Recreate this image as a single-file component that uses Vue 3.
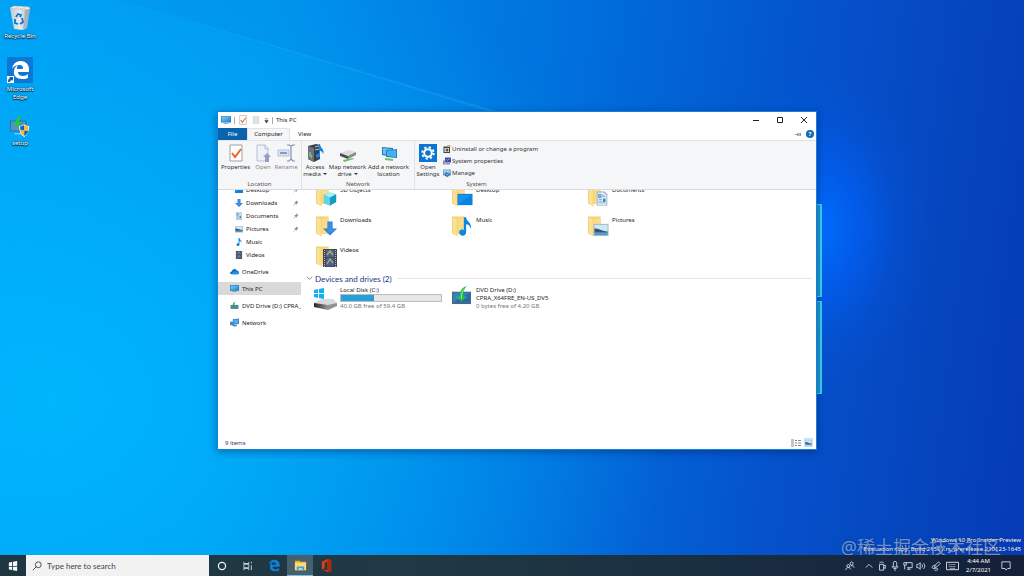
<script setup>
import { ref } from 'vue'

const shortcuts = [
  { name: 'Recycle Bin', icon: 'recycle', size: 'tall' },
  { name: 'Microsoft Edge', icon: 'edge-tile', size: 'tall' },
  { name: 'setup', icon: 'setup', size: 'short' }
]

const groups = [
  {
    name: 'Location',
    key: 'location',
    buttons: [
      { label: ['Properties'], icon: 'properties', width: 'w-m' },
      { label: ['Open'], icon: 'open', width: 'w-xs', disabled: true },
      { label: ['Rename'], icon: 'rename', width: 'w-s', disabled: true }
    ]
  },
  {
    name: 'Network',
    key: 'network',
    buttons: [
      { label: ['Access', 'media'], icon: 'media', width: 'w-s', menu: true },
      { label: ['Map network', 'drive'], icon: 'mapdrive', width: 'w-l', menu: true },
      { label: ['Add a network', 'location'], icon: 'netloc', width: 'w-xl' }
    ]
  },
  {
    name: 'System',
    key: 'system',
    buttons: [{ label: ['Open', 'Settings'], icon: 'settings', width: 'w-s' }],
    links: [
      { label: 'Uninstall or change a program', icon: 'uninstall' },
      { label: 'System properties', icon: 'sysprops' },
      { label: 'Manage', icon: 'manage' }
    ]
  }
]

const quick = [
  { name: 'Desktop', icon: 'desktop', pinned: true },
  { name: 'Downloads', icon: 'down', pinned: true },
  { name: 'Documents', icon: 'doc', pinned: true },
  { name: 'Pictures', icon: 'pic', pinned: true },
  { name: 'Music', icon: 'note' },
  { name: 'Videos', icon: 'film' }
]
const roots = [
  { name: 'OneDrive', icon: 'cloud' },
  { name: 'This PC', icon: 'pc', current: true },
  { name: 'DVD Drive (D:) CPRA_X64FRE', icon: 'dvd-small' },
  { name: 'Network', icon: 'network' }
]

const folders = [
  { name: '3D Objects', icon: 'cube' },
  { name: 'Desktop', icon: 'desktop' },
  { name: 'Documents', icon: 'doc' },
  { name: 'Downloads', icon: 'down' },
  { name: 'Music', icon: 'note' },
  { name: 'Pictures', icon: 'pic' },
  { name: 'Videos', icon: 'film' }
]

const disk = { free: 40, total: 59.4 }
const query = ref('')
const tray = ['people', 'chevron-up', 'camera', 'mic', 'display', 'speaker', 'pen', 'keyboard']
const trayNames = {
  people: 'People', 'chevron-up': 'Show hidden icons', camera: 'Meet now', mic: 'Microphone',
  display: 'Network status', speaker: 'Volume', pen: 'Ink workspace', keyboard: 'Touch keyboard'
}
</script>

<template>
  <svg class="defs" aria-hidden="true">
    <defs>
      <linearGradient id="g-folder" x1="0" x2="1" y1="0" y2="0">
        <stop offset="0" stop-color="#f3cf6b" /><stop offset=".35" stop-color="#fbe5a0" /><stop offset="1" stop-color="#fbd775" />
      </linearGradient>
      <linearGradient id="g-screen" x1="0" x2="1" y1="0" y2="1">
        <stop offset="0" stop-color="#7cd0fa" /><stop offset="1" stop-color="#1c84d4" />
      </linearGradient>
      <linearGradient id="g-disk" x1="0" x2="1"><stop offset="0" stop-color="#222" /><stop offset="1" stop-color="#999" /></linearGradient>
      <linearGradient id="g-bin" x1="0" x2="1"><stop offset="0" stop-color="#b9cad6" /><stop offset=".5" stop-color="#e6edf1" /><stop offset="1" stop-color="#9fb2c0" /></linearGradient>
    </defs>
    <symbol id="recycle" viewBox="0 0 26 26">
      <path d="M3 4l4-2 15 1 1 2-3 19-4 2-9-1z" fill="url(#g-bin)" />
      <path d="M3 4l4-2 15 1 1 2-5 1z" fill="#f3f5f5" stroke="#a9b5bd" stroke-width=".6" />
      <path d="M6 4l5-1 3 1 4-1 2 2-3 .5z" fill="#cfd8dd" />
      <path d="M18 6l5-1-3 19-4 2z" fill="#92a8b8" opacity=".6" />
      <path d="M9 13l2-3 3 1-1 2M15 14l1 4-3 2M11 20l-3-1 0-4" fill="none" stroke="#1773c4" stroke-width="1.8" />
    </symbol>
    <symbol id="edge-e" viewBox="0 0 20 20">
      <path d="M1 9C2 3 6 1 10 1c5 0 8 4 8 8v3H7c0 3 3 4 5 4 2 0 4-1 5-2v4c-2 1-4 1-6 1-5 0-9-3-8-8 0-3 2-5 4-6-1 1-1 3-1 4h6c0-3-1-4-4-4C5 5 3 6 1 9z" fill="currentColor" />
    </symbol>
    <symbol id="edge-tile" viewBox="0 0 26 26">
      <path d="M0 0h26v26H0z" fill="#0c78d4" />
      <path transform="translate(4 3)" d="M1 9C2 3 6 1 10 1c5 0 8 4 8 8v3H7c0 3 3 4 5 4 2 0 4-1 5-2v4c-2 1-4 1-6 1-5 0-9-3-8-8 0-3 2-5 4-6-1 1-1 3-1 4h6c0-3-1-4-4-4C5 5 3 6 1 9z" fill="#fff" />
      <path d="M0 19h7v7H0z" fill="#fff" /><path d="M1 25c0-2 0-3 2-4l-1-1h4v4l-1-1c-1 0-2 1-2 2z" fill="#235fae" />
    </symbol>
    <symbol id="setup" viewBox="0 0 24 24">
      <path d="M1 6h18v12H1z" fill="#356b99" /><path d="M2 7h16v10H2z" fill="#4d94c9" />
      <path d="M6 20h9v1H6z" fill="#cdd7df" />
      <path d="M14 0c-2 2-3 5-3 8h3l-5 5-5-5h3c1-4 3-7 7-8z" fill="#28c83a" />
      <path d="M11 12c2 0 4-1 5.500-2 1.500 1 3.500 2 5.500 2 0 6-2 10-5.500 12C13 22 11 18 11 12z" fill="#fff" />
      <path d="M12 12.500c2 0 3-.5 4.500-1.500v6H12.500zM16.500 17h4.500c-.5 3-2 5-4.500 6z" fill="#1c62b8" />
      <path d="M21 12.500c-2 0-3-.5-4.500-1.500v6H21zM16.500 17H12.500c.5 3 2 5 4 6z" fill="#f9b91e" />
    </symbol>
    <symbol id="folder" viewBox="0 0 22 22">
      <path d="M0 1h13v18H6z" fill="#f3cd6c" /><path d="M5 2h8v17H5z" fill="#f6d47c" />
      <path d="M0 1l6 3v18l-6-3z" fill="url(#g-folder)" /><path d="M7 3h6v16H7z" fill="#fbdc8c" />
    </symbol>
    <symbol id="desktop" viewBox="0 0 16 16"><path d="M0 2h16v12H0z" fill="#0a7bd6" /><path d="M1 3h14v10H1z" fill="#1593f2" /><path d="M1 13L15 3v10z" fill="#0783e0" /></symbol>
    <symbol id="down" viewBox="0 0 16 16"><path d="M5 0h6v8h5l-8 8-8-8h5z" fill="#2e80d2" /><path d="M6 1h4v8h3l-5 5-5-5h3z" fill="#428fdd" /></symbol>
    <symbol id="doc" viewBox="0 0 16 16"><path d="M2 0h9l3 3v13H2z" fill="#8fa9bd" /><path d="M3 1h7l3 3v11H3z" fill="#f4f9fc" /><path d="M4 3h3v4H4zM8 4h3M8 6h4M4 9h4M4 11h4M4 13h8" fill="#6eb4e4" stroke="#65a1cf" /><path d="M9 8h3v4H9z" fill="#3f89b8" /></symbol>
    <symbol id="pic" viewBox="0 0 16 16"><path d="M0 2h16v13H0z" fill="#a6b5c0" /><path d="M1 3h14v11H1z" fill="#cce9fb" /><path d="M1 7c4-1 8 3 14 3v2H1z" fill="#315a66" /><path d="M1 11h14v3H1z" fill="#5a99cf" /></symbol>
    <symbol id="note" viewBox="0 0 12 16"><path d="M5 0h2c0 4 5 4 4 10-1-3-2-4-4-4v7c0 4-6 4-6 0 0-2 2-3 4-2z" fill="#0c86df" /></symbol>
    <symbol id="film" viewBox="0 0 14 18"><path d="M0 0h14v18H0z" fill="#45484d" /><path d="M3 1h8v7H3z" fill="#3d68a8" /><path d="M3 9h8v8H3z" fill="#3a62a5" /><path d="M4 6l3-4 3 4M4 15l3-5 3 4" stroke="#caa14c" fill="none" stroke-width="1.400" /><path d="M1.500 1v17M12.500 1v17" stroke="#b5b5b5" stroke-dasharray="1 1" /></symbol>
    <symbol id="cube" viewBox="0 0 16 16"><path d="M1 4l7-3 7 2v9l-7 4-7-3z" fill="#27b6d2" /><path d="M1 4l7-3 7 2-7 4z" fill="#a8edf5" /><path d="M8 7l7-4v9l-7 4z" fill="#129dbf" /><path d="M1 4l7 3v9l-7-3z" fill="#5bd4e5" /></symbol>
    <symbol id="cloud" viewBox="0 0 16 16"><path d="M2 13c-3-1-2-5 1-5 1-5 7-6 9-2 3 0 5 3 3 6-1 1-2 1-3 1z" fill="#0f6fc4" /><path d="M4 13c-2-2 1-4 3-4 3-3 8-1 9 2-1 2-2 2-4 2z" fill="#1a96e8" /></symbol>
    <symbol id="pc" viewBox="0 0 16 16"><path d="M0 2h16v10H0z" fill="#2374ad" /><path d="M1 3h14v8H1z" fill="url(#g-screen)" /><path d="M4 13h8v1H4z" fill="#4787af" /></symbol>
    <symbol id="dvd-small" viewBox="0 0 16 16"><path d="M1 7h14v7H1z" fill="#5b7380" /><path d="M2 8h12v4H2z" fill="#4691ac" /><path d="M10 1c-2 2-2 4-2 6h3l-4 4-4-4h2c0-3 2-5 5-6z" fill="#28a956" /></symbol>
    <symbol id="network" viewBox="0 0 16 16"><path d="M5 2l11-1v9L5 12z" fill="#2876b8" /><path d="M6 3l9-1v7l-9 2z" fill="#55aee9" /><path d="M0 6l8 1v8l-8-3z" fill="#3d8cd0" /><path d="M7 13l6-2-1 3-4 2z" fill="#5592c0" /></symbol>
    <symbol id="dvd" viewBox="0 0 20 20"><path d="M0 6h20v13H0z" fill="#456982" /><path d="M1 7h18v10H1z" fill="#397fc0" /><path d="M1 17L19 7v10z" fill="#2c68ad" /><path d="M16 0c-4 3-4 7-4 11h4l-6 5-6-5h4c0-6 3-10 8-11z" fill="#23c342" /><path d="M13 3c-3 3-3 7-3 10" stroke="#8cf19a" fill="none" /></symbol>
    <symbol id="drive" viewBox="0 0 24 24">
      <path d="M1 3l4-1v4H1zM6 2l5-1v5H6zM1 7h4v4l-4-1zM6 7h5v5l-5-1z" fill="#0cb3ee" />
      <path d="M1 16l7-4h12l4 4-9 4z" fill="#d8dadb" /><path d="M1 16l14 2v5L1 20z" fill="url(#g-disk)" /><path d="M15 18l9-2v3l-9 4z" fill="#8f9294" />
    </symbol>
    <symbol id="properties" viewBox="0 0 18 18"><path d="M3 1h12v16H3z" fill="#fff" stroke="#9ba1a7" /><path d="M5 9l3 4 6-8" fill="none" stroke="#ee6522" stroke-width="2" /></symbol>
    <symbol id="open" viewBox="0 0 18 18"><path d="M3 1h8l3 4v12H3z" fill="#eef1fa" stroke="#b6c0d8" /><path d="M11 1v4h4" fill="none" stroke="#b6c0d8" /><path d="M13 9l4 4h-2v5h-4v-5H9z" fill="#93a1bd" /></symbol>
    <symbol id="rename" viewBox="0 0 18 18"><path d="M1 6h11v6H1z" fill="#dce3f2" stroke="#b5c1da" /><path d="M3 8h7v2H3z" fill="#8799c1" /><path d="M10 1h2l2 1 2-1h2M14 2v13M10 17h2l2-2 2 2h2" fill="none" stroke="#8390b3" stroke-width="1.200" /></symbol>
    <symbol id="media" viewBox="0 0 18 18"><path d="M2 2l8-2 4 1v14l-6 3-6-3z" fill="#3a3f46" /><path d="M2 2l6 2v14l-6-3z" fill="#6b727b" /><path d="M9 3l4-1M9 6l4-1M4 8v5" stroke="#a6cbe0" /><path d="M13 0h1c0 4 5 5 3 10-1-3-2-3-3-3v5c-1 3-5 2-4-1l3-2z" fill="#1387e3" /><path d="M3 12l3-2v5z" fill="#84b945" /></symbol>
    <symbol id="mapdrive" viewBox="0 0 18 18"><path d="M1 9l9-3 7 2-8 4z" fill="#ddd" /><path d="M1 9l8 3v3l-8-3z" fill="#4c4f51" /><path d="M9 12l8-4v3l-8 4z" fill="#858889" /><path d="M4 16l10-2 1 1-10 3z" fill="#67c167" /></symbol>
    <symbol id="netloc" viewBox="0 0 18 18"><path d="M2 3l11 1v9L2 11z" fill="#2377b4" /><path d="M3 4l9 1v7l-9-2z" fill="#64c2f4" /><path d="M6 6l11-1v9l-11-1z" fill="#2582c5" /><path d="M7 7l9-1v7l-9-1z" fill="#48b0ee" /><path d="M5 14l8 1v2l-8-1z" fill="#68c468" /></symbol>
    <symbol id="settings" viewBox="0 0 18 18"><path d="M0 0h18v18H0z" fill="#0b76d1" /><circle cx="9" cy="9" r="3.800" fill="none" stroke="#fff" stroke-width="2" /><circle cx="9" cy="9" r="5.700" fill="none" stroke="#fff" stroke-width="2" stroke-dasharray="2.200 2.277" /></symbol>
    <symbol id="uninstall" viewBox="0 0 16 16"><path d="M1 3h13v13H1z" fill="#3f4248" /><path d="M3 6h9v8H3z" fill="#e7e5dc" /><circle cx="8" cy="10" r="3" fill="#49565b" /><path d="M8 0h7v4H8z" fill="#d4b461" /></symbol>
    <symbol id="sysprops" viewBox="0 0 16 16"><path d="M4 1h12v10H4z" fill="#5756a5" /><path d="M5 2h10v8H5z" fill="#3335c5" /><path d="M7 4l2 3 5-4" fill="none" stroke="#bfc5ff" stroke-width="1.500" /><path d="M0 7h5v8H0zM6 12h8v3H6z" fill="#8a93a1" /></symbol>
    <symbol id="manage" viewBox="0 0 16 16"><path d="M0 1h16v12H0z" fill="#6999b8" /><path d="M1 2h14v7H1z" fill="#95cceb" /><path d="M4 14V9l3-3 3 3 3-2v6l-4 3z" fill="#2d75ae" /><path d="M6 10l2 2 3-2" stroke="#fff" fill="none" /></symbol>
    <symbol id="pin" viewBox="0 0 10 10"><path d="M6 1l3 3-2 1-1 3-4-4 3-1z" fill="#8b8f93" /><path d="M4 6L1 9" stroke="#7b7f83" /></symbol>
    <symbol id="page" viewBox="0 0 12 12"><path d="M2 1h8v10H2z" fill="#dedfe2" /></symbol>
    <symbol id="ribbon-pin" viewBox="0 0 10 10"><path d="M0 5h4M4 3v4M4 4h4M4 6h4M8 3v4" fill="none" stroke="#82868b" stroke-width="1.200" /></symbol>
    <symbol id="search" viewBox="0 0 12 12"><circle cx="7.500" cy="4.500" r="3.500" fill="none" stroke="#333" /><path d="M5 7L1 11" stroke="#333" /></symbol>
    <symbol id="windows" viewBox="0 0 12 12"><path d="M1 2l4-1v5H1zM6 1l5-1v6H6zM1 7h4v4l-4-1zM6 7h5v5l-5-1z" fill="#f7fbfd" /></symbol>
    <symbol id="cortana" viewBox="0 0 12 12"><circle cx="6" cy="6" r="4.300" fill="none" stroke="#f2f5f6" stroke-width="1.500" /></symbol>
    <symbol id="taskview" viewBox="0 0 12 12"><path d="M1 1v2h6V1M1 11V9h6v2M1 4h6v4H1zM10 1v2M10 5v6" fill="none" stroke="#dbe2e5" /></symbol>
    <symbol id="explorer" viewBox="0 0 14 14"><path d="M1 2h5l1 1h6v9H1z" fill="#efb32e" /><path d="M1 4h12v8H1z" fill="#fbdc76" /><path d="M3 8h8v5H9v-3H5v3H3z" fill="#409fe0" /></symbol>
    <symbol id="office" viewBox="0 0 14 14"><path d="M2 3l6-3 4 1v12l-4 1-6-3 6 1V3L5 4v6l-3 1z" fill="#e23b16" /><path d="M8 0l4 1v12l-4 1z" fill="#b5270c" /></symbol>
    <symbol id="people" viewBox="0 0 12 12"><circle cx="4" cy="6" r="1.800" /><circle cx="8" cy="3" r="1.800" /><path d="M1 11c0-4 5-4 6-1M7 6c2-1 4 0 4 2" /></symbol>
    <symbol id="chevron-up" viewBox="0 0 12 12"><path d="M2 8l4-4 4 4" /></symbol>
    <symbol id="camera" viewBox="0 0 12 12"><path d="M3 4h5v7H3zM8 6l2-1v4L8 8M3 2c2-1 3-1 5 0" /></symbol>
    <symbol id="mic" viewBox="0 0 12 12"><path d="M4 2c0-2 4-2 4 0v4c0 2-4 2-4 0zM2.500 6c0 4 7 4 7 0M6 9v3" /></symbol>
    <symbol id="display" viewBox="0 0 12 12"><path d="M3 2h8v6H5M7 8v2M5 10h4M1 2h3v3H1zM2 5v5" /></symbol>
    <symbol id="speaker" viewBox="0 0 12 12"><path d="M1 4h2l2-2v8L3 8H1zM7 4c1 1 1 3 0 4M9 2.500c2 2 2 5 0 7" /></symbol>
    <symbol id="pen" viewBox="0 0 12 12"><path d="M4 8l1-3 4-4 2 2-4 4zM5 5C1 5 0 9 3 9s5-1 5 1-3 1-4 1" /></symbol>
    <symbol id="keyboard" viewBox="0 0 14 10"><path d="M.5 1h13v8H.5z" /><path d="M3 3.500h8M3 5.500h8" stroke-dasharray="1 1" /><path d="M4 7.500h6" stroke-width=".700" /></symbol>
    <symbol id="action" viewBox="0 0 12 12"><path d="M1 1h10v8H8l-2 2-1-2H1z" fill="none" stroke="#dfe6ee" /></symbol>
    <symbol id="details" viewBox="0 0 10 8"><path d="M0 0h3v8H0z" fill="#c5c5c5" /><path d="M4 1.500h2M7 1.500h3M4 4h2M7 4h3M4 6.500h2M7 6.500h3" fill="none" stroke="#888" stroke-width="1" /></symbol>
  </svg>

  <div class="screen">
    <main class="wallpaper">
      <svg class="beams" viewBox="0 0 1024 555" preserveAspectRatio="none" aria-hidden="true">
        <path d="M120 0L500 112H490z" fill="#5cc6ff" opacity=".14" />
        <path d="M120 0L820 206V0z" fill="#0050c8" opacity=".06" />
      </svg>
      <div class="logo-edge" aria-hidden="true"><i></i><i></i></div>

      <nav class="shortcuts" aria-label="Desktop">
        <a v-for="s in shortcuts" :key="s.name" href="#" class="shortcut" :class="s.size">
          <svg class="shortcut-icon" aria-hidden="true"><use :href="'#' + s.icon" /></svg>
          <span>{{ s.name }}</span>
        </a>
      </nav>

      <section class="window" aria-label="This PC">
        <header class="titlebar">
          <svg class="ic10" aria-hidden="true"><use href="#pc" /></svg>
          <span class="sep"></span>
          <button class="flat" aria-label="Properties"><svg class="ic10" aria-hidden="true"><use href="#properties" /></svg></button>
          <button class="flat" aria-label="New folder"><svg class="ic10" aria-hidden="true"><use href="#page" /></svg></button>
          <button class="flat caret" aria-label="Customize toolbar"><svg viewBox="0 0 6 6" aria-hidden="true"><path d="M1 1h4M1 3h4l-2 3z" stroke="#333" stroke-width=".600" fill="#333" /></svg></button>
          <span class="sep"></span>
          <h1>This PC</h1>
          <div class="controls">
            <button class="flat" aria-label="Minimize"><svg viewBox="0 0 8 8"><path d="M1 4.500h6" /></svg></button>
            <button class="flat" aria-label="Maximize"><svg viewBox="0 0 8 8"><path d="M1.500 1.500h5v5h-5z" /></svg></button>
            <button class="flat" aria-label="Close"><svg viewBox="0 0 8 8"><path d="M1 1l6 6M7 1L1 7" /></svg></button>
          </div>
        </header>

        <div class="tabs">
          <button class="tab file">File</button>
          <button class="tab active">Computer</button>
          <button class="tab">View</button>
          <div class="tab-tools">
            <button class="flat" aria-label="Pin the ribbon"><svg class="ic7" aria-hidden="true"><use href="#ribbon-pin" /></svg></button>
            <button class="help" aria-label="Help">?</button>
          </div>
        </div>

        <div class="ribbon">
          <section v-for="g in groups" :key="g.key" class="group" :class="g.key">
            <div class="group-body">
              <button v-for="b in g.buttons" :key="b.icon" class="big" :class="b.width" :disabled="b.disabled">
                <svg aria-hidden="true"><use :href="'#' + b.icon" /></svg>
                <span v-for="(l, i) in b.label" :key="l">{{ l }}<i v-if="b.menu && i === b.label.length - 1" class="tri"></i></span>
              </button>
              <ul v-if="g.links" class="small-list">
                <li v-for="l in g.links" :key="l.icon">
                  <button class="flat small"><svg aria-hidden="true"><use :href="'#' + l.icon" /></svg>{{ l.label }}</button>
                </li>
              </ul>
            </div>
            <h2>{{ g.name }}</h2>
          </section>
        </div>

        <div class="body">
          <nav class="tree" aria-label="Navigation">
            <div class="tree-inner">
              <a v-for="q in quick" :key="q.name" href="#" class="leaf">
                <svg class="ic8" aria-hidden="true"><use :href="'#' + q.icon" /></svg>
                <span>{{ q.name }}</span>
                <svg v-if="q.pinned" class="pin" aria-hidden="true"><use href="#pin" /></svg>
              </a>
              <a v-for="r in roots" :key="r.name" href="#" class="root" :class="{ current: r.current }">
                <svg class="root-icon" aria-hidden="true"><use :href="'#' + r.icon" /></svg>
                <span>{{ r.name }}</span>
              </a>
            </div>
          </nav>

          <div class="files">
            <div class="files-inner">
              <div class="grid">
                <a v-for="f in folders" :key="f.name" href="#" class="item">
                  <span class="thumb">
                    <svg class="folder" aria-hidden="true"><use href="#folder" /></svg>
                    <svg class="badge" :class="f.icon" aria-hidden="true"><use :href="'#' + f.icon" /></svg>
                  </span>
                  <span class="name">{{ f.name }}</span>
                </a>
              </div>
              <h3 class="heading">
                <svg viewBox="0 0 8 8" aria-hidden="true"><path d="M1 2l3 3 3-3" fill="none" stroke="#777" /></svg>
                Devices and drives (2)
              </h3>
              <div class="grid">
                <a href="#" class="item">
                  <span class="thumb"><svg class="drive" aria-hidden="true"><use href="#drive" /></svg></span>
                  <span class="info">
                    <span>Local Disk (C:)</span>
                    <span class="bar"><i :style="{ width: (1 - disk.free / disk.total) * 100 + '%' }"></i></span>
                    <small>{{ disk.free.toFixed(1) }} GB free of {{ disk.total }} GB</small>
                  </span>
                </a>
                <a href="#" class="item">
                  <span class="thumb"><svg class="dvd" aria-hidden="true"><use href="#dvd" /></svg></span>
                  <span class="info">
                    <span>DVD Drive (D:)</span>
                    <span>CPRA_X64FRE_EN-US_DV5</span>
                    <small>0 bytes free of 4.20 GB</small>
                  </span>
                </a>
              </div>
            </div>
          </div>
        </div>

        <footer class="status">
          <span>9 items</span>
          <button class="flat" aria-label="Details view"><svg class="view" aria-hidden="true"><use href="#details" /></svg></button>
          <button class="flat chosen" aria-label="Large icons view"><svg class="ic7" aria-hidden="true"><use href="#pic" /></svg></button>
        </footer>
      </section>

      <div class="edition">
        <p>Windows 10 Pro Insider Preview</p>
        <p>Evaluation copy. Build 21301.rs_prerelease.210123-1645</p>
      </div>
      <div class="credit">@稀土掘金技术社区</div>
    </main>

    <footer class="taskbar">
      <button class="task start" aria-label="Start"><svg aria-hidden="true"><use href="#windows" /></svg></button>
      <label class="searchbox">
        <svg aria-hidden="true"><use href="#search" /></svg>
        <input v-model="query" type="text" placeholder="Type here to search" aria-label="Search" />
      </label>
      <button class="task" aria-label="Cortana"><svg aria-hidden="true"><use href="#cortana" /></svg></button>
      <button class="task" aria-label="Task view"><svg aria-hidden="true"><use href="#taskview" /></svg></button>
      <button class="task edge" aria-label="Microsoft Edge"><svg aria-hidden="true"><use href="#edge-e" /></svg></button>
      <button class="task running" aria-label="File Explorer"><svg aria-hidden="true"><use href="#explorer" /></svg></button>
      <button class="task large" aria-label="Office"><svg aria-hidden="true"><use href="#office" /></svg></button>
      <div class="tray">
        <button v-for="t in tray" :key="t" class="flat tray-item" :class="t" :aria-label="trayNames[t]">
          <svg aria-hidden="true"><use :href="'#' + t" /></svg>
        </button>
        <time class="clock"><span>4:44 AM</span><span>2/7/2021</span></time>
        <button class="flat action" aria-label="Notifications"><svg aria-hidden="true"><use href="#action" /></svg></button>
      </div>
    </footer>
  </div>
</template>

<style>
body { margin: 0; overflow: hidden; }
</style>

<style scoped>
.defs { position: absolute; width: 0; height: 0; }
.screen, .screen * { box-sizing: border-box; }
.screen {
  height: 100vh; display: flex; flex-direction: column; overflow: hidden;
  font-family: "Noto Sans", "Open Sans", sans-serif; font-size: 6px; line-height: 8px; color: #222;
}
button, input { font: inherit; color: inherit; border: 0; margin: 0; padding: 0; background: none; }
a { color: inherit; text-decoration: none; }
h1, h2, h3, p, ul { margin: 0; padding: 0; font-weight: 400; font-size: inherit; list-style: none; }
svg { display: block; flex: none; }
.flat { display: flex; align-items: center; justify-content: center; }
.ic10 { width: 10px; height: 10px; }
.ic8 { width: 8px; height: 8px; }
.ic7 { width: 7px; height: 7px; }

.wallpaper {
  position: relative; flex: 1; min-height: 0; overflow: hidden;
  background:
    radial-gradient(ellipse 110px 160px at 80% 41%, rgba(0, 110, 255, .95), rgba(0, 100, 255, .6) 35%, rgba(0, 92, 240, .2) 70%, rgba(0, 90, 230, 0)),
    radial-gradient(ellipse 620px 520px at 5% 72%, rgba(0, 186, 255, .85), rgba(0, 176, 255, 0)),
    linear-gradient(97deg, #009cf2 0%, #0094ee 25%, #0076e0 50%, #0553cc 75%, #053bb4 100%);
}
.beams { position: absolute; inset: 0; width: 100%; height: 100%; }
.logo-edge { position: absolute; top: 204px; bottom: 161px; right: 202px; width: 12px; display: flex; flex-direction: column; gap: 4px; }
.logo-edge i { flex: 1; background: #2098d0; border: 1px solid #35d4ee; border-right-width: 2px; }

.shortcuts { position: absolute; top: 4px; left: 0; width: 40px; display: flex; flex-direction: column; }
.shortcut { display: flex; flex-direction: column; align-items: center; gap: 2px; text-align: center; color: #fff; text-shadow: 0 0 2px #000, 0 1px 1px #000; }
.shortcut-icon { width: 26px; height: 26px; }
.shortcut.tall { height: 53px; }
.shortcut.tall + .shortcut.tall { height: 58px; }
.short .shortcut-icon { width: 22px; height: 22px; }

.window {
  position: absolute; top: 111px; bottom: 105px; left: 217px; right: 207px;
  display: flex; flex-direction: column; overflow: hidden;
  background: #fff; border: 1px solid #1682d6; box-shadow: 0 2px 8px rgba(0, 20, 80, .4);
}
.titlebar { height: 16px; display: flex; align-items: center; gap: 3px; padding-left: 3px; }
.sep { width: 1px; height: 7px; background: #aaa; }
.titlebar .caret svg { width: 5px; height: 5px; }
.titlebar h1 { flex: 1; }
.controls { display: flex; }
.controls button { width: 24px; height: 16px; }
.controls svg { width: 8px; height: 8px; fill: none; stroke: #222; stroke-width: 1; }

.tabs { height: 13px; display: flex; align-items: stretch; border-bottom: 1px solid #e2e3e4; }
.tab { padding: 0 8px; }
.tab.file { width: 29px; padding: 0; background: #0a64ad; color: #fff; }
.tab.active { width: 43px; padding: 0; background: #f5f6f7; box-shadow: inset 1px 1px #e2e3e4, inset -1px 0 #e2e3e4; }
.tab-tools { margin-left: auto; display: flex; align-items: center; gap: 4px; padding-right: 2px; }
.help { width: 8px; height: 8px; border-radius: 50%; background: #0a6cba; color: #fff; font-weight: 700; line-height: 8px; text-align: center; }

.ribbon { height: 49px; display: flex; background: #f5f6f7; border-bottom: 1px solid #d9dadb; color: #333; }
.group { display: flex; flex-direction: column; justify-content: space-between; padding-bottom: 1px; border-right: 1px solid #e0e1e2; }
.group.location { min-width: 84px; }
.group.network { min-width: 113px; }
.group.system { border-right: 0; }
.group h2 { text-align: center; color: #555; }
.group-body { display: flex; padding-top: 2px; }
.big { display: flex; flex-direction: column; align-items: center; padding-top: 1px; line-height: 7px; white-space: nowrap; }
.big svg { width: 18px; height: 18px; margin-bottom: 2px; }
.big:disabled { color: #888; }
.w-xs { width: 20px; }
.w-s { width: 26px; }
.w-m { width: 35px; }
.w-l { width: 39px; }
.w-xl { width: 43px; }
.tri { display: inline-block; margin-left: 2px; vertical-align: 1px; border: 2px solid transparent; border-top-color: #333; border-bottom: 0; }
.small-list { padding-left: 2px; }
.small { height: 12px; gap: 1px; white-space: nowrap; }
.small svg { width: 8px; height: 8px; }

.body { flex: 1; min-height: 0; display: flex; }
.tree { width: 83px; overflow: hidden; }
.tree-inner { margin-top: -7px; display: flex; flex-direction: column; }
.leaf, .root { display: flex; align-items: center; height: 13px; padding-left: 17px; gap: 3px; white-space: nowrap; }
.leaf .pin { width: 6px; height: 6px; margin-left: auto; margin-right: 2px; }
.root { padding-left: 12px; margin-top: 4px; overflow: hidden; }
.root.current { background: #d9d9d9; }
.root-icon { width: 9px; height: 9px; }
.files { flex: 1; min-width: 0; overflow: hidden; }
.files-inner { margin-top: -5px; padding-left: 5px; }
.grid { display: grid; grid-template-columns: repeat(auto-fill, 136px); padding-left: 10px; }
.item { display: flex; gap: 3px; height: 30px; }
.thumb { position: relative; width: 21px; height: 22px; flex: none; }
.thumb .folder { width: 21px; height: 22px; }
.thumb .badge { position: absolute; right: 0; bottom: 1px; width: 14px; height: 15px; }
.thumb .badge.note { right: 1px; height: 19px; }
.thumb .badge.film { height: 18px; bottom: 0; }
.thumb .badge.pic, .thumb .badge.desktop { width: 16px; bottom: 0; }
.drive { width: 24px; height: 24px; margin: 2px 0 0 -3px; }
.dvd { width: 19px; height: 19px; margin-top: 1px; }
.name { padding-top: 1px; }
.info { display: flex; flex-direction: column; padding-top: 1px; white-space: nowrap; }
.info small { font-size: 6px; color: #777; }
.bar { width: 102px; height: 8px; border: 1px solid #bcbcbc; background: #e6e6e6; }
.bar i { display: block; height: 100%; background: #26a0da; }
.heading { display: flex; align-items: center; gap: 2px; height: 13px; margin-top: -3px; color: #1e3287; font-family: Lato, "Noto Sans", sans-serif; font-size: 8px; white-space: nowrap; }
.heading svg { width: 7px; height: 7px; }
.heading::after { content: ""; flex: 1; height: 1px; margin: 0 4px 0 3px; background: #e5e5e5; }

.status { height: 13px; display: flex; align-items: center; gap: 3px; padding: 0 3px 0 7px; color: #283c78; }
.status span { flex: 1; }
.status .view { width: 10px; height: 8px; }
.status .chosen { background: #c6e5fb; padding: 1px; }

.edition { position: absolute; right: 3px; bottom: 1px; color: #fff; text-align: right; line-height: 9px; text-shadow: 0 0 1px #001a60; }
.credit {
  position: absolute; right: 23px; bottom: -4px; font: 18px/24px "Noto Sans", "Noto Sans CJK SC", sans-serif;
  color: rgba(255, 255, 255, .45); text-shadow: 0 0 2px rgba(0, 0, 0, .3); white-space: nowrap;
}

.taskbar { position: relative; height: 21px; display: flex; background: linear-gradient(90deg, #1d3640, #203944 40%, #192c40 75%, #142038); }
.task { width: 26px; display: flex; align-items: center; justify-content: center; }
.task svg { width: 10px; height: 10px; }
.task.edge { color: #0c80dc; }
.task.edge svg, .task.running svg, .task.large svg { width: 13px; height: 13px; }
.task.running { background: #47606b; border-bottom: 1px solid #76b9ed; }
.searchbox { width: 183px; display: flex; align-items: center; gap: 5px; padding-left: 6px; background: #f2f2f2; font-family: Lato, "Noto Sans", sans-serif; font-size: 8px; }
.searchbox svg { width: 10px; height: 10px; }
.searchbox input { flex: 1; min-width: 0; outline: 0; }
.searchbox input::placeholder { color: #444; opacity: 1; }
.tray { margin-left: auto; display: flex; align-items: center; padding-right: 9px; }
.tray-item { width: 13px; }
.tray-item svg { width: 10px; height: 10px; fill: none; stroke: #dfe6ee; stroke-width: 1; }
.tray-item.people { width: 24px; }
.tray-item.pen { width: 17px; }
.tray-item.keyboard { width: 17px; }
.tray-item.keyboard svg { width: 13px; height: 10px; }
.clock { display: flex; flex-direction: column; align-items: center; width: 35px; line-height: 9px; color: #fff; }
.action { width: 19px; }
.action svg { width: 10px; height: 10px; }
</style>
